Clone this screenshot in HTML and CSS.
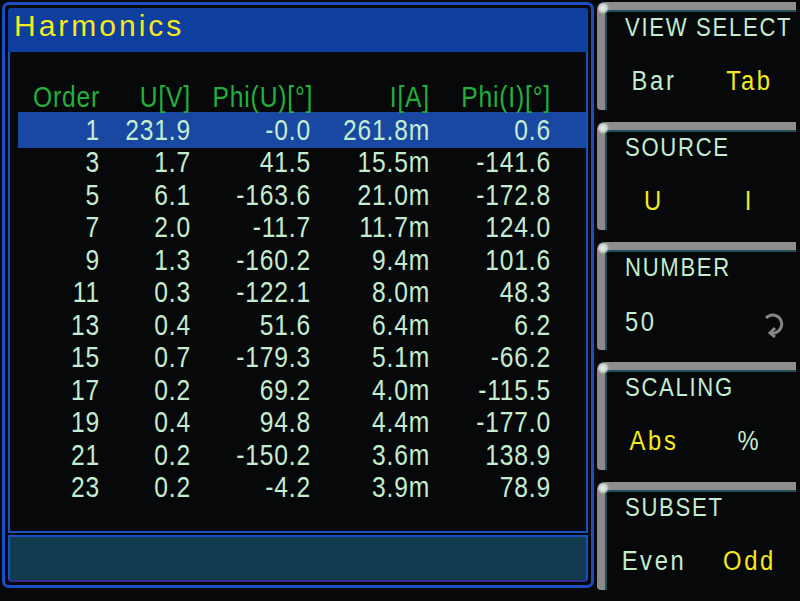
FILE: index.html
```html
<!DOCTYPE html>
<html>
<head>
  <title>Harmonics</title>
  <link rel="stylesheet" href="styles.css">
</head>
<body>
  <div class="screen">
    <div class="frame">
      <div class="title">Harmonics</div>

      <div class="panel">
        <div class="table">
          <div class="row head">
            <span>Order</span><span>U[V]</span><span>Phi(U)[°]</span><span>I[A]</span><span>Phi(I)[°]</span>
          </div>
          <div class="row sel">
            <span>1</span><span>231.9</span><span>-0.0</span><span>261.8m</span><span>0.6</span>
          </div>
          <div class="row">
            <span>3</span><span>1.7</span><span>41.5</span><span>15.5m</span><span>-141.6</span>
          </div>
          <div class="row">
            <span>5</span><span>6.1</span><span>-163.6</span><span>21.0m</span><span>-172.8</span>
          </div>
          <div class="row">
            <span>7</span><span>2.0</span><span>-11.7</span><span>11.7m</span><span>124.0</span>
          </div>
          <div class="row">
            <span>9</span><span>1.3</span><span>-160.2</span><span>9.4m</span><span>101.6</span>
          </div>
          <div class="row">
            <span>11</span><span>0.3</span><span>-122.1</span><span>8.0m</span><span>48.3</span>
          </div>
          <div class="row">
            <span>13</span><span>0.4</span><span>51.6</span><span>6.4m</span><span>6.2</span>
          </div>
          <div class="row">
            <span>15</span><span>0.7</span><span>-179.3</span><span>5.1m</span><span>-66.2</span>
          </div>
          <div class="row">
            <span>17</span><span>0.2</span><span>69.2</span><span>4.0m</span><span>-115.5</span>
          </div>
          <div class="row">
            <span>19</span><span>0.4</span><span>94.8</span><span>4.4m</span><span>-177.0</span>
          </div>
          <div class="row">
            <span>21</span><span>0.2</span><span>-150.2</span><span>3.6m</span><span>138.9</span>
          </div>
          <div class="row">
            <span>23</span><span>0.2</span><span>-4.2</span><span>3.9m</span><span>78.9</span>
          </div>
        </div>
      </div>

      <div class="status"></div>
    </div>

    <div class="keys">
      <div class="key">
        <div class="key-label">VIEW SELECT</div>
        <div class="key-values">
          <span>Bar</span><span class="on">Tab</span>
        </div>
      </div>
      <div class="key">
        <div class="key-label">SOURCE</div>
        <div class="key-values">
          <span class="on">U</span><span class="on">I</span>
        </div>
      </div>
      <div class="key">
        <div class="key-label">NUMBER</div>
        <div class="key-values number">
          <span class="count">50</span>
          <svg class="knob" width="26" height="28" viewBox="0 0 26 28">
            <path d="M6 8 A9 9 0 1 1 12 23" fill="none" stroke="#858585" stroke-width="3"/>
            <path d="M15 18 L10 23 L15 27" fill="none" stroke="#858585" stroke-width="3"/>
          </svg>
        </div>
      </div>
      <div class="key">
        <div class="key-label">SCALING</div>
        <div class="key-values">
          <span class="on">Abs</span><span>%</span>
        </div>
      </div>
      <div class="key">
        <div class="key-label">SUBSET</div>
        <div class="key-values">
          <span>Even</span><span class="on">Odd</span>
        </div>
      </div>
    </div>
  </div>
</body>
</html>
```

FILE: styles.css
```css
body {
  margin: 0;
  background: #07080a;
  font-family: "Liberation Sans", Arial, sans-serif;
  color: #c4ecd0;
  white-space: nowrap;
}
.screen {
  display: flex;
  width: 800px;
  height: 601px;
  overflow: hidden;
}

/* measurement window */
.frame {
  margin: 2px 0 0 2px;
  width: 592px;
  height: 586px;
  box-sizing: border-box;
  border: 3px solid #1a4fc4;
  border-radius: 7px;
  padding: 3px;
  display: flex;
  flex-direction: column;
}
.title {
  height: 44px;
  flex: none;
  background: #0f3f9e;
  border-radius: 3px 3px 0 0;
  color: #f4ea1c;
  font-size: 30px;
  letter-spacing: 3px;
  line-height: 36px;
  padding-left: 6px;
}
.panel {
  height: 481px;
  flex: none;
  box-sizing: border-box;
  border: 2px solid #1a4fc4;
  border-top: none;
  padding: 29px 0 0 8px;
}
.status {
  flex: 1;
  margin-top: 2px;
  background: #133b4f;
  border: 2px solid #1a4fc4;
  border-bottom-color: #3a2b94;
  border-radius: 0 0 4px 4px;
}

/* the instrument font is a tall, narrow pixel face */
.row {
  display: grid;
  grid-template-columns: 82px 91px 120px 119px 121px;
  height: 32.5px;
  line-height: 32.5px;
  font-size: 30px;
  letter-spacing: 1px;
}
.row span {
  display: block;
  text-align: right;
  transform: scaleX(0.82);
  transform-origin: right center;
}
.head {
  color: #22b03c;
}
.sel {
  background: #1848a2;
  box-shadow: 0 -2px 0 #1848a2, 0 2px 0 #1848a2;
}

/* soft keys */
.keys {
  display: flex;
  flex-direction: column;
  gap: 12px;
  padding: 2px 0 0 3px;
}
.key {
  position: relative;
  width: 191px;
  height: 100px;
  border-top: 8px solid #8e8e8e;
  border-left: 8px solid #8a8a8a;
  border-top-left-radius: 9px;
  border-bottom-left-radius: 4px;
  box-shadow: inset 2px 2px 0 #21505c;
}
.key::before {
  content: "";
  position: absolute;
  top: -8px;
  left: -8px;
  width: 12px;
  height: 12px;
  border-radius: 50%;
  background: radial-gradient(circle, #f0f4f0 0, #c8d0cc 45%, rgba(142,142,142,0) 75%);
}
.key-label {
  margin: 2px 0 0 20px;
  font-size: 26px;
  line-height: 30px;
  letter-spacing: 2px;
  transform: scaleX(0.85);
  transform-origin: left center;
}
.key-values {
  display: grid;
  grid-template-columns: 98px 93px;
  margin-top: 24px;
  font-size: 27px;
  line-height: 30px;
  letter-spacing: 3px;
  text-align: center;
}
.key-values span {
  display: block;
  transform: scaleX(0.88);
}
.key-values .on {
  color: #f4ea1c;
}
.number {
  display: flex;
  justify-content: space-between;
  align-items: center;
  padding: 0 10px 0 20px;
}
.number .count {
  transform-origin: left center;
}
.knob {
  margin-top: 4px;
}
```
